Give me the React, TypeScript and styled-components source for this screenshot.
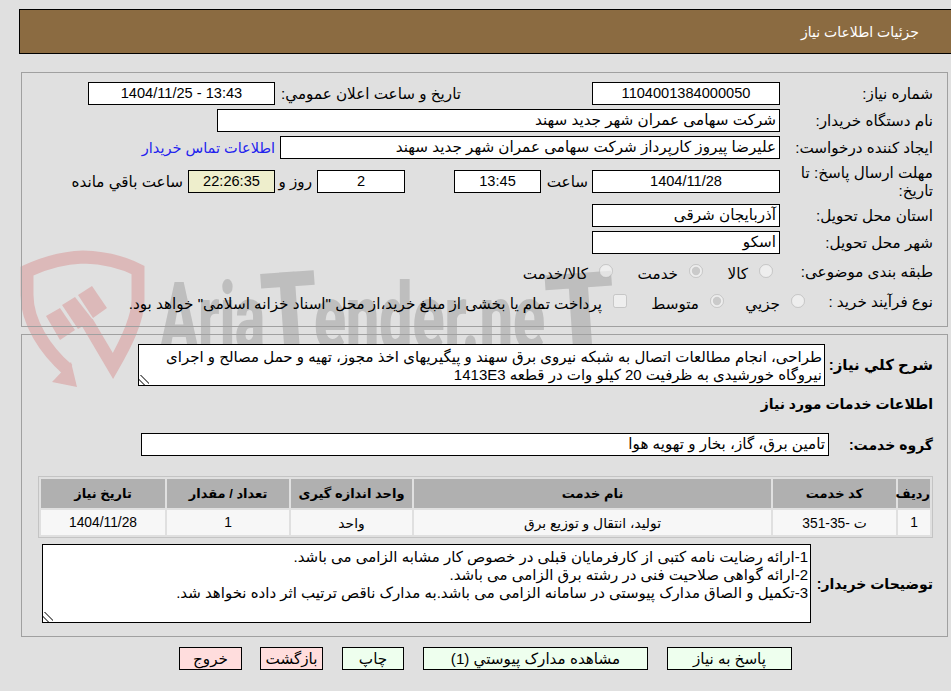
import styled, { createGlobalStyle } from "styled-components";

const GlobalStyle = createGlobalStyle`
  html, body {
    margin: 0;
    padding: 0;
    background: #e0e0e0;
    overflow: hidden;
  }
  body, textarea, input, button, table {
    font-family: "Liberation Sans", "DejaVu Sans", sans-serif;
    font-size: 15.2px;
    color: #000;
  }
`;

const Page = styled.div`
  position: relative;
  width: 951px;
  height: 691px;
  box-sizing: border-box;
  padding-top: 9px;
  direction: rtl;
  overflow: hidden;
`;

const Watermark = styled.svg`
  position: absolute;
  left: 0;
  top: 240px;
  z-index: 0;

  text {
    fill: #bebebe;
    font-family: Roboto, sans-serif;
    font-weight: 900;
    direction: ltr;
    unicode-bidi: isolate;
  }
`;

const Header = styled.header`
  position: relative;
  z-index: 1;
  box-sizing: border-box;
  height: 45px;
  margin-left: 19px;
  padding: 0 32px 0 0;
  background: #8b6b41;
  border: 1px solid #000;
  border-right: 0;
  color: #fff;
  display: flex;
  align-items: center;
  font-size: 14px;
`;

const Panel = styled.section<{ $top: number; $height: number }>`
  position: relative;
  z-index: 1;
  box-sizing: border-box;
  height: ${(p) => p.$height}px;
  margin: ${(p) => p.$top}px 3px 0 0;
  margin-left: 21px;
  border: 1px solid #a0a0a0;
  padding: 9px 14px 0 14px;
`;

const Stack = styled.div`
  display: flex;
  flex-direction: column;
  gap: 4px;
`;

const Row = styled.div<{ $h?: number; $mt?: number }>`
  display: flex;
  align-items: center;
  height: ${(p) => p.$h ?? 23}px;
  margin-top: ${(p) => p.$mt ?? 0}px;
`;

const Label = styled.div<{ $w?: number }>`
  width: ${(p) => p.$w ?? 153}px;
  flex: none;
  line-height: 18px;
`;

const BoldLabel = styled.div<{ $w: number; $fs?: number }>`
  width: ${(p) => p.$w}px;
  flex: none;
  font-weight: bold;
  font-size: ${(p) => p.$fs ?? 14}px;
`;

const Box = styled.div<{ $w: number; $bg?: string; $mr?: number }>`
  box-sizing: border-box;
  width: ${(p) => p.$w}px;
  height: 23px;
  flex: none;
  margin-right: ${(p) => p.$mr ?? 0}px;
  border: 1px solid #000;
  background: ${(p) => p.$bg ?? "#fff"};
  padding: 0 3px;
  line-height: 20px;
  text-align: right;
  white-space: nowrap;
  overflow: hidden;
`;

const NumberBox = styled(Box)`
  text-align: center;
  font-size: 14.6px;
`;

const Text = styled.span<{ $w?: number; $pr?: number }>`
  box-sizing: border-box;
  flex: none;
  width: ${(p) => (p.$w ? `${p.$w}px` : "auto")};
  padding-right: ${(p) => p.$pr ?? 5}px;
  white-space: nowrap;
`;

const ContactLink = styled.a`
  margin-right: 5px;
  color: #2222ee;
  font-size: 14.5px;
  text-decoration: none;
  white-space: nowrap;
`;

const Option = styled.label<{ $w: number }>`
  width: ${(p) => p.$w}px;
  flex: none;
  display: flex;
  align-items: center;
  padding-top: 4px;
  box-sizing: border-box;
  white-space: nowrap;
`;

const Mark = styled.input`
  width: 14px;
  height: 14px;
  margin: 0 7px 0 11px;
  position: relative;
  top: -3px;
  flex: none;
`;

const Area = styled.textarea<{ $w: number; $h: number }>`
  box-sizing: border-box;
  width: ${(p) => p.$w}px;
  height: ${(p) => p.$h}px;
  flex: none;
  display: block;
  border: 1px solid #000;
  border-radius: 0;
  outline: 0;
  background: #fff;
  margin: 0;
  padding: 3px 2px 2px;
  font-size: 15px;
  line-height: 18px;
  direction: rtl;
  overflow: hidden;
  white-space: pre-wrap;

  &::-webkit-resizer {
    background: linear-gradient(
        45deg,
        transparent 22%,
        #777 22%,
        #777 34%,
        transparent 34%,
        transparent 52%,
        #777 52%,
        #777 64%,
        transparent 64%
      )
      left bottom / 10px 10px no-repeat;
  }
`;

const Table = styled.table`
  width: 895px;
  margin: 20px 0 0 0;
  border: 1px solid #c4c4c4;
  border-spacing: 2px;
  table-layout: fixed;
  direction: rtl;
`;

const Th = styled.th<{ $w?: number }>`
  width: ${(p) => (p.$w ? `${p.$w}px` : "auto")};
  height: 29px;
  padding: 0;
  background: #b0b0b0;
  font-weight: bold;
  font-size: 13px;
  white-space: nowrap;
`;

const Td = styled.td`
  height: 25px;
  padding: 0;
  background: #f7f7f7;
  text-align: center;
  font-size: 13.8px;
`;

const Actions = styled.div`
  position: relative;
  z-index: 1;
  display: flex;
  margin: 10px 159px 0 0;
`;

const Button = styled.button<{ $w: number; $ml: number; $danger?: boolean }>`
  box-sizing: border-box;
  width: ${(p) => p.$w}px;
  height: 23px;
  margin-left: ${(p) => p.$ml}px;
  padding: 0;
  border: 1px solid #000;
  border-radius: 0;
  background: ${(p) => (p.$danger ? "#ffdddd" : "#eeffee")};
  white-space: nowrap;
`;

const AriaLogo = () => (
  <Watermark width="640" height="160" viewBox="0 240 640 160">
    <g fill="none" stroke="#dcb9b9" strokeWidth="13">
      <path d="M68 370 C45 350 27 322 27 295 L27 271 Q55 258 83 257 Q115 258 138 270 L138 300 C138 320 125 345 113 366 L87 322" />
    </g>
    <g fill="#dcb9b9">
      <polygon points="71,362 77,387 52,382" />
      <polygon points="46,316 60,308 75,330 60,340" />
      <polygon points="62,305 75,297 93,320 78,329" />
      <polygon points="78,295 92,286 107,308 93,318" />
    </g>
    <text x="160" y="350" fontSize="94" textLength="105" lengthAdjust="spacingAndGlyphs">Aria</text>
    <text fontSize="110" transform="translate(264 352) rotate(-4) scale(0.82 1)">T</text>
    <text x="314" y="350" fontSize="94" textLength="231" lengthAdjust="spacingAndGlyphs">ender.ne</text>
    <text fontSize="112" transform="translate(548 355) rotate(-4)">T</text>
  </Watermark>
);

export default function App() {
  return (
    <Page>
      <GlobalStyle />
      <AriaLogo />
      <Header>جزئیات اطلاعات نیاز</Header>

      <Panel $top={18} $height={255}>
        <Stack>
          <Row>
            <Label>شماره نیاز:</Label>
            <NumberBox $w={188}>1104001384000050</NumberBox>
            <Text $w={317} $pr={131}>تاریخ و ساعت اعلان عمومي:</Text>
            <NumberBox $w={187}>13:43 - 1404/11/25</NumberBox>
          </Row>
          <Row>
            <Label>نام دستگاه خریدار:</Label>
            <Box $w={563}>شرکت سهامی عمران شهر جدید سهند</Box>
          </Row>
          <Row>
            <Label>ایجاد کننده درخواست:</Label>
            <Box $w={500}>علیرضا پیروز کارپرداز شرکت سهامی عمران شهر جدید سهند</Box>
            <ContactLink href="#">اطلاعات تماس خریدار</ContactLink>
          </Row>
          <Row $h={37}>
            <Label>مهلت ارسال پاسخ: تا تاریخ:</Label>
            <NumberBox $w={188}>1404/11/28</NumberBox>
            <Text $w={51} $pr={4}>ساعت</Text>
            <NumberBox $w={87}>13:45</NumberBox>
            <NumberBox $w={88} $mr={49}>2</NumberBox>
            <Text $w={42}>روز و</Text>
            <NumberBox $w={87} $bg="#eeeecc">22:26:35</NumberBox>
            <Text>ساعت باقي مانده</Text>
          </Row>
          <Row>
            <Label>استان محل تحویل:</Label>
            <Box $w={188}>آذربایجان شرقی</Box>
          </Row>
          <Row>
            <Label>شهر محل تحویل:</Label>
            <Box $w={188}>اسکو</Box>
          </Row>
        </Stack>
        <Row $h={20} $mt={8}>
          <Label>طبقه بندی موضوعی:</Label>
          <Option $w={70}>
            <Mark type="radio" disabled />
            کالا
          </Option>
          <Option $w={90}>
            <Mark type="radio" disabled defaultChecked />
            خدمت
          </Option>
          <Option $w={100}>
            <Mark type="radio" disabled />
            کالا/خدمت
          </Option>
        </Row>
        <Row $h={20} $mt={10}>
          <Label $w={121}>نوع فرآیند خرید :</Label>
          <Option $w={81}>
            <Mark type="radio" disabled />
            جزیي
          </Option>
          <Option $w={97}>
            <Mark type="radio" disabled defaultChecked />
            متوسط
          </Option>
          <Option $w={520}>
            <Mark type="checkbox" disabled />
            پرداخت تمام یا بخشی از مبلغ خرید،از محل "اسناد خزانه اسلامی" خواهد بود.
          </Option>
        </Row>
      </Panel>

      <Panel $top={7} $height={303}>
        <Row $h={42}>
          <BoldLabel $w={108} $fs={15}>شرح کلي نیاز:</BoldLabel>
          <Area
            $w={687}
            $h={42}
            readOnly
            value={"طراحی، انجام مطالعات اتصال به شبکه نیروی برق سهند و پیگیریهای اخذ مجوز، تهیه و حمل مصالح و اجرای\nنیروگاه خورشیدی به ظرفیت 20 کیلو وات در قطعه 1413E3"}
          />
        </Row>
        <Row $h={20} $mt={8}>
          <BoldLabel $w={300}>اطلاعات خدمات مورد نیاز</BoldLabel>
        </Row>
        <Row $mt={19}>
          <BoldLabel $w={104}>گروه خدمت:</BoldLabel>
          <Box $w={688}>تامین برق، گاز، بخار و تهویه هوا</Box>
        </Row>
        <Table>
          <thead>
            <tr>
              <Th $w={32}>ردیف</Th>
              <Th $w={123}>کد خدمت</Th>
              <Th $w={357}>نام خدمت</Th>
              <Th $w={121}>واحد اندازه گیری</Th>
              <Th $w={122}>تعداد / مقدار</Th>
              <Th>تاریخ نیاز</Th>
            </tr>
          </thead>
          <tbody>
            <tr>
              <Td>1</Td>
              <Td>ت -35-351</Td>
              <Td>تولید، انتقال و توزیع برق</Td>
              <Td>واحد</Td>
              <Td>1</Td>
              <Td>1404/11/28</Td>
            </tr>
          </tbody>
        </Table>
        <Row $h={79} $mt={6}>
          <BoldLabel $w={122}>توضیحات خریدار:</BoldLabel>
          <Area
            $w={769}
            $h={79}
            readOnly
            value={"1-ارائه رضایت نامه کتبی از کارفرمایان قبلی در خصوص کار مشابه الزامی می باشد.\n2-ارائه گواهی صلاحیت فنی در رشته برق الزامی می باشد.\n3-تکمیل و الصاق مدارک پیوستی در سامانه الزامی می باشد.به مدارک ناقص ترتیب اثر داده نخواهد شد."}
          />
        </Row>
      </Panel>

      <Actions>
        <Button $w={125} $ml={19}>پاسخ به نیاز</Button>
        <Button $w={225} $ml={19}>مشاهده مدارک پیوستي (1)</Button>
        <Button $w={62} $ml={19}>چاپ</Button>
        <Button $w={63} $ml={18} $danger>بازگشت</Button>
        <Button $w={63} $ml={0} $danger>خروج</Button>
      </Actions>
    </Page>
  );
}
